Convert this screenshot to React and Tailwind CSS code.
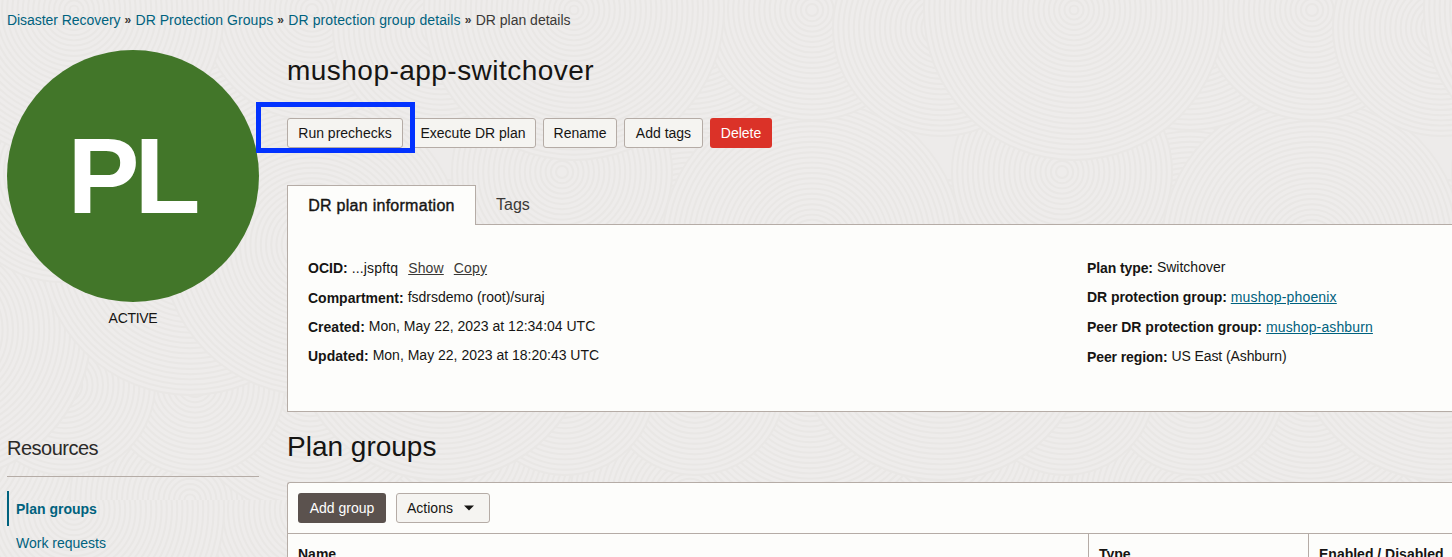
import React from "react";

const DISCS = [
  [62, 490, 150], [312, 500, 150], [441, 440, 150], [-59, 440, 150],
  [190, 500, 120], [310, 385, 130], [195, 385, 90], [65, 385, 90],
  [441, 330, 150], [-59, 330, 150], [190, 245, 150], [62, 172, 110],
  [312, 245, 150], [190, 10, 120], [312, 10, 110], [441, 28, 108], [74, 10, 150],
];

function Rings({ cx, cy, r }) {
  const radii = [];
  for (let i = r; i > 2; i -= 5.2) radii.push(i);
  return (
    <g>
      <circle cx={cx} cy={cy} r={r} fill="#eeeceb" />
      {radii.map((v) => (
        <circle key={v} cx={cx} cy={cy} r={v} fill="none" stroke="#e9e7e5" strokeWidth="1.9" />
      ))}
    </g>
  );
}

function Backdrop() {
  return (
    <svg className="absolute inset-0 h-full w-full" aria-hidden="true">
      <defs>
        <pattern id="swirl" x="0" y="0" width="500" height="500" patternUnits="userSpaceOnUse">
          <rect width="500" height="500" fill="#edebea" />
          {DISCS.map(([x, y, r], i) =>
            [-500, 0, 500].map((dx) => <Rings key={dx + "-" + i} cx={x + dx} cy={y} r={r} />)
          )}
        </pattern>
      </defs>
      <rect width="100%" height="100%" fill="url(#swirl)" />
    </svg>
  );
}

const button =
  "flex h-[30px] items-center justify-center rounded-[3px] border border-[#b5aca6] bg-[#f5f4f1] text-sm text-[#161513]";

function Field({ label, children, className, labelClass, valueClass }) {
  return (
    <div className={"flex h-5 gap-1 whitespace-nowrap leading-5 " + (className || "")}>
      <span className={"font-bold " + (labelClass || "")}>{label}</span>
      <span className={"flex " + (valueClass || "")}>{children}</span>
    </div>
  );
}

function Separator() {
  return <span className="w-[7px] pt-[2px] text-[12px] font-bold tracking-tighter text-[#3b3936]">»</span>;
}

function Breadcrumb() {
  return (
    <nav className="flex h-10 items-center gap-1 whitespace-nowrap pl-[7px] text-sm text-[#00627e]">
      <a className="tracking-[-0.05px]">Disaster Recovery</a>
      <Separator />
      <a className="tracking-[0.04px]">DR Protection Groups</a>
      <Separator />
      <a className="tracking-[0.1px]">DR protection group details</a>
      <Separator />
      <span className="text-[#3b3936]">DR plan details</span>
    </nav>
  );
}

function Sidebar() {
  return (
    <aside className="w-[287px] shrink-0 pl-[7px] pt-[10px]">
      <div className="flex h-[252px] w-[252px] items-center justify-center rounded-full bg-[#427629] pr-[3px] text-[108px] font-bold leading-none tracking-[-5px] text-white">
        PL
      </div>
      <div className="mt-[6px] w-[252px] text-center text-sm leading-5 tracking-[-0.3px]">ACTIVE</div>
      <h2 className="mt-[106px] w-[252px] border-b border-[#b5aca6] pb-[14px] text-xl leading-7 tracking-[-0.5px] text-[#2b2a28]">
        Resources
      </h2>
      <ul className="mt-[14px] text-sm text-[#00627e]">
        <li className="flex h-[35px] items-center border-l-2 border-[#00627e] pl-[7px] font-bold">Plan groups</li>
        <li className="flex h-[33px] items-center pl-[9px]">Work requests</li>
      </ul>
    </aside>
  );
}

function PlanDetails() {
  return (
    <section>
      <div className="flex h-10">
        <div className="relative z-10 flex h-10 w-[189px] shrink-0 items-center justify-center border border-b-0 border-[#b5aca6] bg-[#fdfdfb] text-base tracking-[0.27px] [-webkit-text-stroke:0.4px_#161513]">
          DR plan information
        </div>
        <div className="flex h-10 items-center pl-5 text-base text-[#3b3936]">Tags</div>
      </div>
      <div className="-mt-px flex h-[188px] border border-r-0 border-[#b5aca6] bg-[#fdfdfb] pl-5 pt-[33px] text-sm">
        <div className="w-[779px] shrink-0">
          <Field label="OCID:">
            <span className="tracking-[0.15px]">...jspftq</span>
            <a className="ml-[10px] tracking-[0.15px] text-[#3b3936] underline">Show</a>
            <a className="ml-[10px] tracking-[0.15px] text-[#3b3936] underline">Copy</a>
          </Field>
          <Field label="Compartment:" className="mt-[9px]" labelClass="pt-px">fsdrsdemo (root)/suraj</Field>
          <Field label="Created:" className="mt-[9px]" labelClass="pt-px">Mon, May 22, 2023 at 12:34:04 UTC</Field>
          <Field label="Updated:" className="mt-[9px]" labelClass="pt-px">Mon, May 22, 2023 at 18:20:43 UTC</Field>
        </div>
        <div>
          <Field label="Plan type:" labelClass="tracking-[-0.1px]" valueClass="-mt-px">Switchover</Field>
          <Field label="DR protection group:" className="mt-[9px]" labelClass="tracking-[-0.05px]">
            <a className="tracking-[0.18px] text-[#00627e] underline">mushop-phoenix</a>
          </Field>
          <Field label="Peer DR protection group:" className="mt-[10px]">
            <a className="tracking-[0.13px] text-[#00627e] underline">mushop-ashburn</a>
          </Field>
          <Field label="Peer region:" className="mt-[10px]" labelClass="tracking-[-0.1px]" valueClass="-mt-px tracking-[-0.1px]">
            US East (Ashburn)
          </Field>
        </div>
      </div>
    </section>
  );
}

function PlanGroups() {
  return (
    <section>
      <h2 className="mt-[17px] text-[28px] leading-9">Plan groups</h2>
      <div className="mt-[17px] rounded-tl-[3px] border border-r-0 border-[#b5aca6] bg-[#fdfdfb]">
        <div className="flex h-[51px] items-center gap-[10px] border-b border-[#b5aca6] pl-[10px]">
          <button className="h-[30px] w-[88px] rounded-[3px] bg-[#5b524e] text-sm text-white">Add group</button>
          <button className={button + " w-[94px] gap-[11px] pr-[5px]"}>
            Actions
            <svg width="10" height="6" viewBox="0 0 10 6" fill="#161513">
              <path d="M0 0.5h10L5 5.5z" />
            </svg>
          </button>
        </div>
        <div className="flex h-10 text-sm font-bold">
          <div className="w-[800px] shrink-0 pl-[10px] pt-[10px]">Name</div>
          <div className="w-[220px] shrink-0 border-l border-[#b5aca6] pl-[10px] pt-[10px]">Type</div>
          <div className="whitespace-nowrap border-l border-[#b5aca6] pl-[10px] pt-[10px]">Enabled / Disabled</div>
        </div>
      </div>
    </section>
  );
}

export default function App() {
  return (
    <div className="relative h-[557px] w-full overflow-hidden bg-[#edebea] font-['Liberation_Sans',Arial,sans-serif] text-[#161513]">
      <Backdrop />
      <div className="relative">
        <Breadcrumb />
        <div className="flex">
          <Sidebar />
          <main className="min-w-0 flex-1 pt-[13px]">
            <h1 className="text-[28px] leading-9 tracking-[0.47px]">mushop-app-switchover</h1>
            <div className="relative mt-[29px] flex">
              <button className={button + " w-[116px]"}>Run prechecks</button>
              <button className={button + " ml-[7px] w-[126px]"}>Execute DR plan</button>
              <button className={button + " ml-[7px] w-[74px]"}>Rename</button>
              <button className={button + " ml-[7px] w-[79px]"}>Add tags</button>
              <button className="ml-[7px] h-[30px] w-[62px] rounded-[3px] bg-[#db3228] text-sm text-white">Delete</button>
              <div className="absolute -left-[31px] -top-4 h-[51px] w-[159px] border-5 border-[#0232ff]" />
            </div>
            <div className="mt-[37px]">
              <PlanDetails />
            </div>
            <PlanGroups />
          </main>
        </div>
      </div>
    </div>
  );
}
